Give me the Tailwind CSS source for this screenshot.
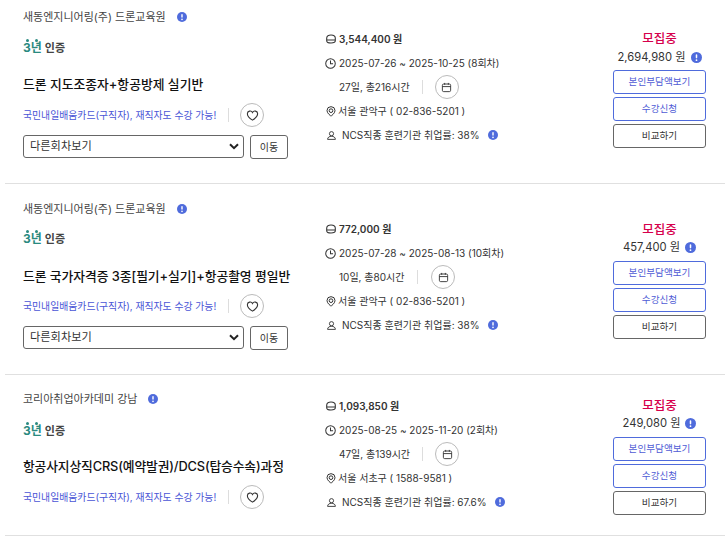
<!DOCTYPE html>
<html lang="ko"><head><meta charset="utf-8">
<script src="https://cdn.jsdelivr.net/npm/@tailwindcss/browser@4"></script>
</head>
<body class="bg-white w-[728px] h-[543px] overflow-hidden font-['Inter','Noto_Sans_CJK_KR',sans-serif] text-[#333]">
<svg class="hidden"><defs>
<symbol id="info" viewBox="0 0 10 10"><circle cx="5" cy="5" r="5" fill="#4f6bdc"/><rect x="4.3" y="2" width="1.4" height="3.8" rx=".7" fill="#fff"/><circle cx="5" cy="7.4" r=".8" fill="#fff"/></symbol>
<symbol id="heart" viewBox="0 0 24 24"><path d="M12 20.5S2.5 15 2.5 8.8A5 5 0 0 1 12 6.6a5 5 0 0 1 9.5 2.2C21.500 15 12 20.500 12 20.500z" fill="none" stroke="#333" stroke-width="2"/></symbol>
<symbol id="coin" viewBox="0 0 10 10"><path d="M.7 4.200C.7 2 2.700 1 5 1s4.300 1 4.300 3.200v2.600C9.300 8.300 8 9 5 9s-4.300-.7-4.300-2.200zM.7 6h8.600" fill="none" stroke="#333" stroke-width="1.100"/></symbol>
<symbol id="clock" viewBox="0 0 12 12"><circle cx="6" cy="6" r="5.200" fill="none" stroke="#333" stroke-width="1.100"/><path d="M6 2.800v3.500h2.800" fill="none" stroke="#333" stroke-width="1.100"/></symbol>
<symbol id="cal" viewBox="0 0 12 12"><rect x="1.500" y="2.200" width="9" height="8.300" rx="1.400" fill="none" stroke="#333" stroke-width="1"/><path d="M1.500 5h9M4 1v2M8 1v2" fill="none" stroke="#333" stroke-width="1"/></symbol>
<symbol id="pin" viewBox="0 0 12 12"><path d="M6 11.500S1.200 8.300 1.200 5a4.800 4.800 0 0 1 9.600 0c0 3.300-4.800 6.500-4.800 6.500z" fill="none" stroke="#333" stroke-width="1.200"/><circle cx="6" cy="5" r="2.200" fill="none" stroke="#333" stroke-width="1.200"/></symbol>
<symbol id="user" viewBox="0 0 12 12"><circle cx="6" cy="3.600" r="2.800" fill="none" stroke="#333" stroke-width="1.200"/><path d="M.8 11.200c0-2.800 2.400-4.200 5.200-4.200s5.200 1.400 5.200 4.200z" fill="none" stroke="#333" stroke-width="1.200"/></symbol>
</defs></svg>

<div class="w-[725px] pl-[5px]">

<!-- Row 1 -->
<section class="h-[184px] border-b border-[#e0e0e0] flex">
  <div class="w-[319px] pl-[18px] pt-[9px]">
    <div class="flex items-center h-[16px] text-[11px] leading-[16px] text-[#444]"><span>새동엔지니어링(주) 드론교육원</span><svg class="w-[10px] h-[10px] ml-[11px]"><use href="#info"/></svg></div>
    <div class="flex items-end h-[20px] mt-[11px] leading-[16px] font-semibold"><span class="text-[12px] text-[#2a8a80] font-bold relative">3년<i class="absolute left-[3px] -top-[1px] w-[2.500px] h-[2.500px] rounded-full bg-[#2a8a80]"></i><i class="absolute left-[12px] -top-[1px] w-[2.500px] h-[2.500px] rounded-full bg-[#2a8a80]"></i></span><span class="ml-[3px] text-[11px] text-[#444]">인증</span></div>
    <h3 class="mt-[19px] h-[20px] text-[12.800px] leading-[20px] font-medium text-[#111]">드론 지도조종자+항공방제 실기반</h3>
    <div class="flex items-center mt-[8px] h-[24px]"><span class="text-[9.850px] text-[#4a55d6]">국민내일배움카드(구직자), 재직자도 수강 가능!</span><span class="w-px h-[14px] bg-[#ddd] ml-[12px]"></span><span class="ml-[11px] w-[24px] h-[24px] rounded-full border border-[#bbb] flex items-center justify-center"><svg class="w-[13px] h-[13px]"><use href="#heart"/></svg></span></div>
    <div class="flex mt-[8px] gap-[6px] h-[24px]">
      <div class="w-[221px] h-[23px] border border-[#666] rounded-[3px] flex items-center justify-between pl-[6px] pr-[4px] text-[11.200px]"><span>다른회차보기</span><svg class="w-[10px] h-[7px]" viewBox="0 0 10 7"><path d="M1 1.200l4 4 4-4" fill="none" stroke="#222" stroke-width="2"/></svg></div>
      <div class="w-[38px] h-[24px] border border-[#666] rounded-[3px] flex items-center justify-center text-[10px]">이동</div>
    </div>
  </div>
  <div class="w-[289px] pl-[2px] pt-[31px] text-[10px] leading-[16px] text-[#333]">
    <div class="flex items-center h-[16px] font-semibold"><svg class="w-[10px] h-[10px] mr-[3px]"><use href="#coin"/></svg>3,544,400 원</div>
    <div class="flex items-center h-[16px] mt-[8px]"><svg class="w-[11px] h-[11px] mr-[3px] -ml-[1px]"><use href="#clock"/></svg>2025-07-26 ~ 2025-10-25 (8회차)</div>
    <div class="flex items-center h-[24px] mt-[4px] pl-[13px]"><span>27일, 총216시간</span><span class="w-px h-[14px] bg-[#ddd] ml-[12px]"></span><span class="ml-[12px] w-[24px] h-[24px] rounded-full border border-[#bbb] flex items-center justify-center"><svg class="w-[11px] h-[11px]"><use href="#cal"/></svg></span></div>
    <div class="flex items-center h-[16px] mt-[4px]"><svg class="w-[10px] h-[11px] mr-[2px]"><use href="#pin"/></svg>서울 관악구 ( 02-836-5201 )</div>
    <div class="flex items-center h-[16px] mt-[8px]"><svg class="w-[9px] h-[9px] ml-[1px] mr-[6px]"><use href="#user"/></svg>NCS직종 훈련기관 취업률: 38%<svg class="w-[10px] h-[10px] ml-[8px]"><use href="#info"/></svg></div>
  </div>
  <div class="w-[93px] pt-[30px] flex flex-col items-center">
    <div class="text-[12.500px] leading-[18px] font-medium text-[#d6004c]">모집중</div>
    <div class="flex items-center h-[18px] text-[11.200px] whitespace-nowrap">2,694,980 원<svg class="w-[11px] h-[11px] ml-[5px]"><use href="#info"/></svg></div>
    <div class="w-[93px] h-[24px] mt-[4px] border border-[#4f6bdc] rounded-[3px] flex items-center justify-center text-[9.600px] text-[#4f5bd5]">본인부담액보기</div>
    <div class="w-[93px] h-[24px] mt-[3px] border border-[#4f6bdc] rounded-[3px] flex items-center justify-center text-[9.600px] text-[#4f5bd5]">수강신청</div>
    <div class="w-[93px] h-[24px] mt-[3px] border border-[#666] rounded-[3px] flex items-center justify-center text-[9.600px]">비교하기</div>
  </div>
</section>

<!-- Row 2 -->
<section class="h-[191px] border-b border-[#e0e0e0] flex">
  <div class="w-[319px] pl-[18px] pt-[17px]">
    <div class="flex items-center h-[16px] text-[11px] leading-[16px] text-[#444]"><span>새동엔지니어링(주) 드론교육원</span><svg class="w-[10px] h-[10px] ml-[11px]"><use href="#info"/></svg></div>
    <div class="flex items-end h-[20px] mt-[10px] leading-[16px] font-semibold"><span class="text-[12px] text-[#2a8a80] font-bold relative">3년<i class="absolute left-[3px] -top-[1px] w-[2.500px] h-[2.500px] rounded-full bg-[#2a8a80]"></i><i class="absolute left-[12px] -top-[1px] w-[2.500px] h-[2.500px] rounded-full bg-[#2a8a80]"></i></span><span class="ml-[3px] text-[11px] text-[#444]">인증</span></div>
    <h3 class="mt-[20px] h-[20px] text-[12.800px] tracking-[-0.050px] leading-[20px] font-medium text-[#111] whitespace-nowrap">드론 국가자격증 3종[필기+실기]+항공촬영 평일반</h3>
    <div class="flex items-center mt-[7px] h-[24px]"><span class="text-[9.850px] text-[#4a55d6]">국민내일배움카드(구직자), 재직자도 수강 가능!</span><span class="w-px h-[14px] bg-[#ddd] ml-[12px]"></span><span class="ml-[11px] w-[24px] h-[24px] rounded-full border border-[#bbb] flex items-center justify-center"><svg class="w-[13px] h-[13px]"><use href="#heart"/></svg></span></div>
    <div class="flex mt-[8px] gap-[6px] h-[24px]">
      <div class="w-[221px] h-[23px] border border-[#666] rounded-[3px] flex items-center justify-between pl-[6px] pr-[4px] text-[11.200px]"><span>다른회차보기</span><svg class="w-[10px] h-[7px]" viewBox="0 0 10 7"><path d="M1 1.200l4 4 4-4" fill="none" stroke="#222" stroke-width="2"/></svg></div>
      <div class="w-[38px] h-[24px] border border-[#666] rounded-[3px] flex items-center justify-center text-[10px]">이동</div>
    </div>
  </div>
  <div class="w-[289px] pl-[2px] pt-[37px] text-[10px] leading-[16px] text-[#333]">
    <div class="flex items-center h-[16px] font-semibold"><svg class="w-[10px] h-[10px] mr-[3px]"><use href="#coin"/></svg>772,000 원</div>
    <div class="flex items-center h-[16px] mt-[8px]"><svg class="w-[11px] h-[11px] mr-[3px] -ml-[1px]"><use href="#clock"/></svg>2025-07-28 ~ 2025-08-13 (10회차)</div>
    <div class="flex items-center h-[24px] mt-[4px] pl-[13px]"><span>10일, 총80시간</span><span class="w-px h-[14px] bg-[#ddd] ml-[13px]"></span><span class="ml-[13px] w-[24px] h-[24px] rounded-full border border-[#bbb] flex items-center justify-center"><svg class="w-[11px] h-[11px]"><use href="#cal"/></svg></span></div>
    <div class="flex items-center h-[16px] mt-[4px]"><svg class="w-[10px] h-[11px] mr-[2px]"><use href="#pin"/></svg>서울 관악구 ( 02-836-5201 )</div>
    <div class="flex items-center h-[16px] mt-[8px]"><svg class="w-[9px] h-[9px] ml-[1px] mr-[6px]"><use href="#user"/></svg>NCS직종 훈련기관 취업률: 38%<svg class="w-[10px] h-[10px] ml-[8px]"><use href="#info"/></svg></div>
  </div>
  <div class="w-[93px] pt-[37px] flex flex-col items-center">
    <div class="text-[12.500px] leading-[18px] font-medium text-[#d6004c]">모집중</div>
    <div class="flex items-center h-[18px] -mt-[1px] text-[11.200px] whitespace-nowrap">457,400 원<svg class="w-[11px] h-[11px] ml-[5px]"><use href="#info"/></svg></div>
    <div class="w-[93px] h-[24px] mt-[5px] border border-[#4f6bdc] rounded-[3px] flex items-center justify-center text-[9.600px] text-[#4f5bd5]">본인부담액보기</div>
    <div class="w-[93px] h-[24px] mt-[3px] border border-[#4f6bdc] rounded-[3px] flex items-center justify-center text-[9.600px] text-[#4f5bd5]">수강신청</div>
    <div class="w-[93px] h-[24px] mt-[3px] border border-[#666] rounded-[3px] flex items-center justify-center text-[9.600px]">비교하기</div>
  </div>
</section>

<!-- Row 3 -->
<section class="h-[161px] border-b border-[#e0e0e0] flex">
  <div class="w-[319px] pl-[18px] pt-[16px]">
    <div class="flex items-center h-[16px] text-[11px] leading-[16px] text-[#444]"><span>코리아취업아카데미 강남</span><svg class="w-[10px] h-[10px] ml-[11px]"><use href="#info"/></svg></div>
    <div class="flex items-end h-[20px] mt-[12px] leading-[16px] font-semibold"><span class="text-[12px] text-[#2a8a80] font-bold relative">3년<i class="absolute left-[3px] -top-[1px] w-[2.500px] h-[2.500px] rounded-full bg-[#2a8a80]"></i><i class="absolute left-[12px] -top-[1px] w-[2.500px] h-[2.500px] rounded-full bg-[#2a8a80]"></i></span><span class="ml-[3px] text-[11px] text-[#444]">인증</span></div>
    <h3 class="mt-[18px] h-[20px] text-[12.800px] tracking-[-0.150px] leading-[20px] font-medium text-[#111] whitespace-nowrap">항공사지상직CRS(예약발권)/DCS(탑승수속)과정</h3>
    <div class="flex items-center mt-[8px] h-[24px]"><span class="text-[9.850px] text-[#4a55d6]">국민내일배움카드(구직자), 재직자도 수강 가능!</span><span class="w-px h-[14px] bg-[#ddd] ml-[12px]"></span><span class="ml-[11px] w-[24px] h-[24px] rounded-full border border-[#bbb] flex items-center justify-center"><svg class="w-[13px] h-[13px]"><use href="#heart"/></svg></span></div>
  </div>
  <div class="w-[289px] pl-[2px] pt-[23px] text-[10px] leading-[16px] text-[#333]">
    <div class="flex items-center h-[16px] font-semibold"><svg class="w-[10px] h-[10px] mr-[3px]"><use href="#coin"/></svg>1,093,850 원</div>
    <div class="flex items-center h-[16px] mt-[8px]"><svg class="w-[11px] h-[11px] mr-[3px] -ml-[1px]"><use href="#clock"/></svg>2025-08-25 ~ 2025-11-20 (2회차)</div>
    <div class="flex items-center h-[24px] mt-[4px] pl-[13px]"><span>47일, 총139시간</span><span class="w-px h-[14px] bg-[#ddd] ml-[12px]"></span><span class="ml-[12px] w-[24px] h-[24px] rounded-full border border-[#bbb] flex items-center justify-center"><svg class="w-[11px] h-[11px]"><use href="#cal"/></svg></span></div>
    <div class="flex items-center h-[16px] mt-[4px]"><svg class="w-[10px] h-[11px] mr-[2px]"><use href="#pin"/></svg>서울 서초구 ( 1588-9581 )</div>
    <div class="flex items-center h-[16px] mt-[8px]"><svg class="w-[9px] h-[9px] ml-[1px] mr-[6px]"><use href="#user"/></svg>NCS직종 훈련기관 취업률: 67.6%<svg class="w-[10px] h-[10px] ml-[8px]"><use href="#info"/></svg></div>
  </div>
  <div class="w-[93px] pt-[22px] flex flex-col items-center">
    <div class="text-[12.500px] leading-[18px] font-medium text-[#d6004c]">모집중</div>
    <div class="flex items-center h-[18px] -mt-[1px] text-[11.200px] whitespace-nowrap">249,080 원<svg class="w-[11px] h-[11px] ml-[5px]"><use href="#info"/></svg></div>
    <div class="w-[93px] h-[24px] mt-[5px] border border-[#4f6bdc] rounded-[3px] flex items-center justify-center text-[9.600px] text-[#4f5bd5]">본인부담액보기</div>
    <div class="w-[93px] h-[24px] mt-[3px] border border-[#4f6bdc] rounded-[3px] flex items-center justify-center text-[9.600px] text-[#4f5bd5]">수강신청</div>
    <div class="w-[93px] h-[24px] mt-[3px] border border-[#666] rounded-[3px] flex items-center justify-center text-[9.600px]">비교하기</div>
  </div>
</section>
</div>
</body></html>
